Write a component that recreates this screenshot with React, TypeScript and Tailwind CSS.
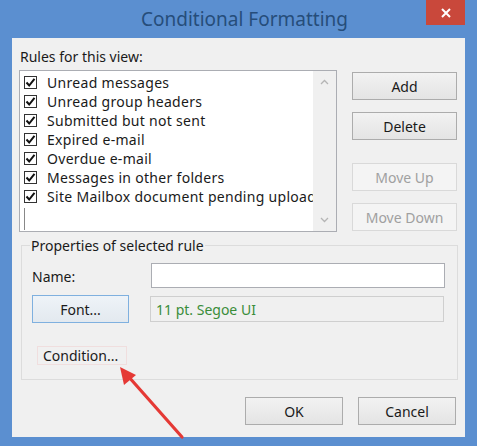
import React from 'react';

const rules = [
  'Unread messages',
  'Unread group headers',
  'Submitted but not sent',
  'Expired e-mail',
  'Overdue e-mail',
  'Messages in other folders',
  'Site Mailbox document pending upload',
];

const Check = () => (
  <span className="w-[13px] h-[13px] border border-[#333] bg-white flex items-center justify-center shrink-0">
    <svg width="11" height="11" viewBox="0 0 11 11">
      <path d="M1.5 5.5 L4.2 8.5 L9.5 1.8" fill="none" stroke="#111" strokeWidth="2" />
    </svg>
  </span>
);

const Btn = ({ label, disabled, className = '' }: { label: string; disabled?: boolean; className?: string }) => (
  <div
    className={`h-[28px] flex items-center justify-center border ${
      disabled ? 'border-[#d9d9d9] bg-[#f4f4f4] text-[#a0a0a0]' : 'border-[#acacac] bg-gradient-to-b from-[#f2f2f2] to-[#e4e4e4] text-[#1a1a1a]'
    } ${className}`}
  >
    {label}
  </div>
);

const App = () => {
  return (
    <div
      className="w-[477px] h-[446px] bg-[#5b8fd0] flex flex-col text-[14px] overflow-hidden relative"
      style={{ fontFamily: '"Noto Sans", "Open Sans", sans-serif' }}
    >
      {/* title bar */}
      <div className="h-[38px] relative flex items-center justify-center shrink-0">
        <span className="text-[19px] text-[#264d7a] pl-[12px]">Conditional Formatting</span>
        <div className="absolute right-[12px] top-0 w-[39px] h-[25px] bg-[#c9483b] flex items-center justify-center">
          <svg width="10" height="10" viewBox="0 0 10 10">
            <path d="M1 1 L9 9 M9 1 L1 9" stroke="#fff" strokeWidth="2" />
          </svg>
        </div>
      </div>

      {/* client area */}
      <div className="ml-[12px] mr-[12px] h-[399px] bg-[#f0f0f0] flex flex-col text-[#1a1a1a]">
        <div className="pl-[8px] pt-[9px] leading-[19px]">Rules for this view:</div>

        <div className="flex mt-[4px] pl-[7px]">
          {/* list */}
          <div className="w-[318px] h-[162px] border border-[#abadb3] bg-white flex">
            <div className="flex-1 min-w-0 pt-[2px] pl-[4px] flex flex-col overflow-hidden">
              {rules.map((r) => (
                <div key={r} className="h-[19px] flex items-center gap-[10px] whitespace-nowrap overflow-hidden tracking-[0.3px]">
                  <Check />
                  <span className="leading-[19px]">{r}</span>
                </div>
              ))}
              <div className="h-[22px] mt-[2px] border-l border-[#888]" />
            </div>
            <div className="w-[23px] shrink-0 bg-[#f0f0f0] flex flex-col justify-between items-center py-[8px]">
              <svg width="9" height="6" viewBox="0 0 9 6">
                <path d="M1 5 L4.5 1.5 L8 5" fill="none" stroke="#b5b5b5" strokeWidth="1.3" />
              </svg>
              <svg width="9" height="6" viewBox="0 0 9 6">
                <path d="M1 1 L4.5 4.5 L8 1" fill="none" stroke="#b5b5b5" strokeWidth="1.3" />
              </svg>
            </div>
          </div>

          {/* side buttons */}
          <div className="ml-[15px] w-[105px] flex flex-col pt-[2px]">
            <Btn label="Add" />
            <Btn label="Delete" className="mt-[12px]" />
            <Btn label="Move Up" disabled className="mt-[23px]" />
            <Btn label="Move Down" disabled className="mt-[12px]" />
          </div>
        </div>

        {/* properties group */}
        <fieldset className="ml-[9px] mr-[7px] mt-[4px] h-[144px] border border-[#dcdcdc] pl-[10px] pr-[12px]">
          <legend className="px-[1px] ml-[-2px] leading-[19px]">Properties of selected rule</legend>
          <div className="flex items-center mt-[8px]">
            <span className="w-[119px] pt-[1px]">Name:</span>
            <div className="w-[294px] h-[25px] border border-[#abadb3] bg-white" />
          </div>
          <div className="flex items-center mt-[7px]">
            <div className="w-[97px] h-[28px] border border-[#7fb0df] bg-gradient-to-b from-[#eef3f8] to-[#e3e9ef] flex items-center justify-center">
              Font...
            </div>
            <div className="ml-[21px] w-[294px] h-[26px] border border-[#cfcfcf] bg-[#f0f0f0] flex items-center pl-[5px] text-[#3a8d3a]">
              11 pt. Segoe UI
            </div>
          </div>
          <div className="mt-[23px] ml-[5px] w-[90px] h-[19px] border border-[#f0dede] flex items-center pl-[5px] leading-[19px]">
            Condition...
          </div>
        </fieldset>

        {/* dialog buttons */}
        <div className="flex justify-end gap-[15px] mt-[17px] pr-[9px]">
          <Btn label="OK" className="w-[98px]" />
          <Btn label="Cancel" className="w-[98px]" />
        </div>
      </div>

      {/* annotation arrow */}
      <svg className="absolute left-0 top-0 pointer-events-none" width="477" height="446">
        <line x1="182" y1="437" x2="128" y2="376" stroke="#e53935" strokeWidth="3.2" strokeLinecap="round" />
        <path d="M120 367 L136 375 L124 385 Z" fill="#e53935" />
      </svg>
    </div>
  );
};

export default App;
